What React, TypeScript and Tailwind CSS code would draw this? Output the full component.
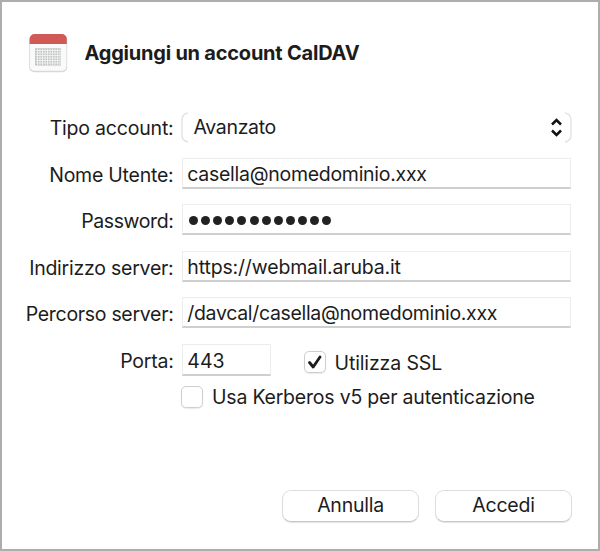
import type { ReactNode } from "react";

const DOTS = Array.from({ length: 12 }, (_, i) => i);
const GRID_COLUMNS = [37.5, 40, 42.5, 45, 47.5, 50, 52.5, 55, 57.5, 60];
const GRID_ROWS = [50.5, 53, 55.5, 58, 60.5, 63];

function CalendarIcon() {
  return (
    <svg className="h-10 w-10 shrink-0" viewBox="28 33 40 40">
      <rect x="29.2" y="34.8" width="38" height="37.4" rx="5" fill="#d8d8d8" />
      <rect x="30" y="34.8" width="36.4" height="36" rx="4.4" fill="#fafafa" />
      <path d="M29.6 44V39a5 5 0 0 1 5-5h27.2a5 5 0 0 1 5 5v5Z" fill="#cf5a57" />
      <rect x="35" y="48.3" width="26" height="17.2" fill="#c0c3c2" />
      {GRID_COLUMNS.map((x) => (
        <path key={x} d={`M${x} 49v16`} stroke="#f2f3f3" strokeWidth="0.9" />
      ))}
      {GRID_ROWS.map((y) => (
        <path key={y} d={`M35.5 ${y}h25`} stroke="#f2f3f3" strokeWidth="0.9" />
      ))}
    </svg>
  );
}

function Row({ label, tracking, children }: { label: string; tracking: string; children: ReactNode }) {
  return (
    <div className="flex h-[46.5px] items-start">
      <label className={`mr-[8.5px] w-[171.5px] pt-[5px] text-right leading-6 whitespace-nowrap ${tracking}`}>{label}</label>
      {children}
    </div>
  );
}

function Field({ size = "h-[31px] w-[389px] pt-[3px]", children }: { size?: string; children: ReactNode }) {
  return (
    <div className={`border border-b-2 border-[#ededed] border-b-[#cfcfcf] pl-[4.3px] leading-6 whitespace-nowrap ${size}`}>
      {children}
    </div>
  );
}

export default function App() {
  return (
    <div className="h-[551px] w-[600px] overflow-hidden border-2 border-[#adadad] bg-white font-['Inter',sans-serif] text-[19.5px] text-[#1c1c1c]">
      <header className="flex h-[109px] items-start pt-[31px] pl-[26px]">
        <CalendarIcon />
        <h1 className="mt-2 ml-[16.5px] text-[20px] leading-6 font-bold tracking-[-0.22px] whitespace-nowrap">
          Aggiungi un account CalDAV
        </h1>
      </header>

      <Row label="Tipo account:" tracking="tracking-[-0.2px]">
        <div className="flex h-[33px] w-[391px] -translate-x-px items-center">
          <svg className="h-[31px] w-2 shrink-0" viewBox="0 0 8 31" fill="none">
            <path d="M7 .8Q1 2 1 8v15q0 6 6 7" stroke="#e0e0e0" strokeWidth="1.3" />
          </svg>
          <span className="-mt-px mr-auto ml-[4.5px] leading-6 tracking-[-0.33px]">Avanzato</span>
          <svg className="h-[31px] w-6 shrink-0" viewBox="0 0 24 31" fill="none">
            <path d="m4 12.500 4.500-4.500 4.500 4.500M4 18.500l4.500 4.500 4.500-4.500" stroke="#111" strokeWidth="2.5" />
            <path d="M17 .8q6 1.200 6 7.200v15q0 6-6 7" stroke="#e0e0e0" strokeWidth="1.3" />
          </svg>
        </div>
      </Row>
      <Row label="Nome Utente:" tracking="tracking-[-0.23px]">
        <Field><span className="tracking-[-0.28px]">casella@nomedominio.xxx</span></Field>
      </Row>
      <Row label="Password:" tracking="tracking-[-0.4px]">
        <Field>
          <div className="flex h-6 items-center gap-[3.1px] pl-[1.8px]">
            {DOTS.map((dot) => (
              <span key={dot} className="h-[9px] w-[9px] rounded-full bg-[#222]" />
            ))}
          </div>
        </Field>
      </Row>
      <Row label="Indirizzo server:" tracking="tracking-[-0.24px]">
        <Field><span className="tracking-[-0.16px]">https://webmail.aruba.it</span></Field>
      </Row>
      <Row label="Percorso server:" tracking="tracking-[-0.3px]">
        <Field><span className="tracking-[-0.33px]">/davcal/casella@nomedominio.xxx</span></Field>
      </Row>
      <Row label="Porta:" tracking="tracking-[-0.25px]">
        <Field size="h-8 w-[89px] pt-1"><span>443</span></Field>
        <div className="mt-[7px] ml-[33px] flex h-[22px] w-[22px] items-center justify-center rounded-[5px] border-[1.5px] border-[#cecece] shadow-[0_1px_1px_#ececec]">
          <svg className="h-4 w-4 shrink-0" viewBox="0 0 16 16" fill="none">
            <path d="m2.500 8.500 3.700 4.500L13 3" stroke="#1c1c1c" strokeWidth="2.8" strokeLinecap="round" strokeLinejoin="round" />
          </svg>
        </div>
        <span className="mt-[7px] ml-[8.5px] leading-6 tracking-[-0.12px] whitespace-nowrap">Utilizza SSL</span>
      </Row>
      <div className="flex pl-[179px]">
        <div className="mt-[-4px] h-[22px] w-[22px] rounded-[5px] border-[1.5px] border-[#cecece] shadow-[0_1px_1px_#ececec]" />
        <span className="mt-[-5px] mb-0.5 ml-[9px] leading-6 tracking-[-0.21px] whitespace-nowrap">Usa Kerberos v5 per autenticazione</span>
      </div>

      <footer className="mt-[79px] flex gap-4 pl-[280px]">
        <button className="h-8 w-[137px] rounded-[9px] border border-[#dedede] border-b-[#c8c8c8] bg-white pb-[2px] leading-6 tracking-[-0.25px] shadow-[0_1px_1px_#e4e4e4]">
          Annulla
        </button>
        <button className="h-8 w-[137px] rounded-[9px] border border-[#dedede] border-b-[#c8c8c8] bg-white pb-[2px] leading-6 tracking-[-0.25px] shadow-[0_1px_1px_#e4e4e4]">
          Accedi
        </button>
      </footer>
    </div>
  );
}
